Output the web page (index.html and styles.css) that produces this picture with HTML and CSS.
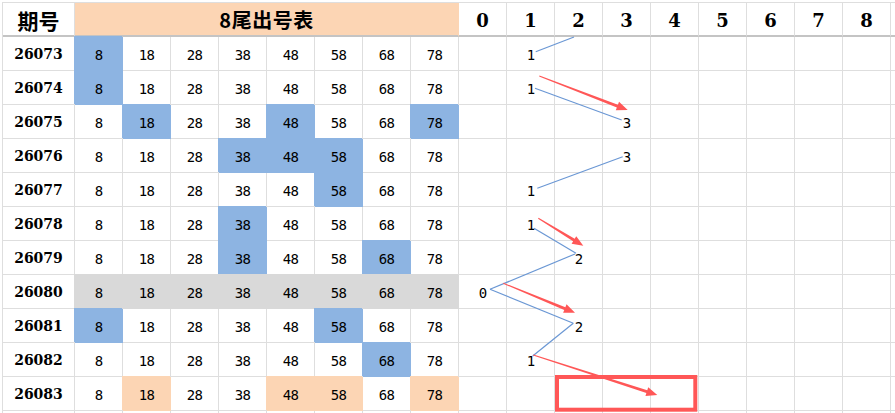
FILE: index.html
```html
<!DOCTYPE html>
<html lang="zh">
<head>
<meta charset="utf-8">
<title>8尾出号表</title>
<link rel="stylesheet" href="styles.css">
</head>
<body>
<div class="sheet">
  <div class="c hd hlabel">期号</div>
  <div class="c hd htitle">8尾出号表</div>
  <div class="c hd hnum">0</div><div class="c hd hnum">1</div><div class="c hd hnum">2</div><div class="c hd hnum">3</div><div class="c hd hnum">4</div><div class="c hd hnum">5</div><div class="c hd hnum">6</div><div class="c hd hnum">7</div><div class="c hd hnum">8</div><div class="c hd"></div>

  <div class="c lbl">26073</div>
  <div class="c n b">8</div><div class="c n">18</div><div class="c n">28</div><div class="c n">38</div><div class="c n">48</div><div class="c n">58</div><div class="c n">68</div><div class="c n">78</div>
  <div class="c k"></div><div class="c k">1</div><div class="c k"></div><div class="c k"></div><div class="c k"></div><div class="c k"></div><div class="c k"></div><div class="c k"></div><div class="c k"></div><div class="c k"></div>

  <div class="c lbl">26074</div>
  <div class="c n b">8</div><div class="c n">18</div><div class="c n">28</div><div class="c n">38</div><div class="c n">48</div><div class="c n">58</div><div class="c n">68</div><div class="c n">78</div>
  <div class="c k"></div><div class="c k">1</div><div class="c k"></div><div class="c k"></div><div class="c k"></div><div class="c k"></div><div class="c k"></div><div class="c k"></div><div class="c k"></div><div class="c k"></div>

  <div class="c lbl">26075</div>
  <div class="c n">8</div><div class="c n b">18</div><div class="c n">28</div><div class="c n">38</div><div class="c n b">48</div><div class="c n">58</div><div class="c n">68</div><div class="c n b">78</div>
  <div class="c k"></div><div class="c k"></div><div class="c k"></div><div class="c k">3</div><div class="c k"></div><div class="c k"></div><div class="c k"></div><div class="c k"></div><div class="c k"></div><div class="c k"></div>

  <div class="c lbl">26076</div>
  <div class="c n">8</div><div class="c n">18</div><div class="c n">28</div><div class="c n b">38</div><div class="c n b">48</div><div class="c n b">58</div><div class="c n">68</div><div class="c n">78</div>
  <div class="c k"></div><div class="c k"></div><div class="c k"></div><div class="c k">3</div><div class="c k"></div><div class="c k"></div><div class="c k"></div><div class="c k"></div><div class="c k"></div><div class="c k"></div>

  <div class="c lbl">26077</div>
  <div class="c n">8</div><div class="c n">18</div><div class="c n">28</div><div class="c n">38</div><div class="c n">48</div><div class="c n b">58</div><div class="c n">68</div><div class="c n">78</div>
  <div class="c k"></div><div class="c k">1</div><div class="c k"></div><div class="c k"></div><div class="c k"></div><div class="c k"></div><div class="c k"></div><div class="c k"></div><div class="c k"></div><div class="c k"></div>

  <div class="c lbl">26078</div>
  <div class="c n">8</div><div class="c n">18</div><div class="c n">28</div><div class="c n b">38</div><div class="c n">48</div><div class="c n">58</div><div class="c n">68</div><div class="c n">78</div>
  <div class="c k"></div><div class="c k">1</div><div class="c k"></div><div class="c k"></div><div class="c k"></div><div class="c k"></div><div class="c k"></div><div class="c k"></div><div class="c k"></div><div class="c k"></div>

  <div class="c lbl">26079</div>
  <div class="c n">8</div><div class="c n">18</div><div class="c n">28</div><div class="c n b">38</div><div class="c n">48</div><div class="c n">58</div><div class="c n b">68</div><div class="c n">78</div>
  <div class="c k"></div><div class="c k"></div><div class="c k">2</div><div class="c k"></div><div class="c k"></div><div class="c k"></div><div class="c k"></div><div class="c k"></div><div class="c k"></div><div class="c k"></div>

  <div class="c lbl">26080</div>
  <div class="c n g">8</div><div class="c n g">18</div><div class="c n g">28</div><div class="c n g">38</div><div class="c n g">48</div><div class="c n g">58</div><div class="c n g">68</div><div class="c n g">78</div>
  <div class="c k">0</div><div class="c k"></div><div class="c k"></div><div class="c k"></div><div class="c k"></div><div class="c k"></div><div class="c k"></div><div class="c k"></div><div class="c k"></div><div class="c k"></div>

  <div class="c lbl">26081</div>
  <div class="c n b">8</div><div class="c n">18</div><div class="c n">28</div><div class="c n">38</div><div class="c n">48</div><div class="c n b">58</div><div class="c n">68</div><div class="c n">78</div>
  <div class="c k"></div><div class="c k"></div><div class="c k">2</div><div class="c k"></div><div class="c k"></div><div class="c k"></div><div class="c k"></div><div class="c k"></div><div class="c k"></div><div class="c k"></div>

  <div class="c lbl">26082</div>
  <div class="c n">8</div><div class="c n">18</div><div class="c n">28</div><div class="c n">38</div><div class="c n">48</div><div class="c n">58</div><div class="c n b">68</div><div class="c n">78</div>
  <div class="c k"></div><div class="c k">1</div><div class="c k"></div><div class="c k"></div><div class="c k"></div><div class="c k"></div><div class="c k"></div><div class="c k"></div><div class="c k"></div><div class="c k"></div>

  <div class="c lbl">26083</div>
  <div class="c n">8</div><div class="c n o">18</div><div class="c n">28</div><div class="c n">38</div><div class="c n o">48</div><div class="c n o">58</div><div class="c n">68</div><div class="c n o">78</div>
  <div class="c k"></div><div class="c k"></div><div class="c k"></div><div class="c k"></div><div class="c k"></div><div class="c k"></div><div class="c k"></div><div class="c k"></div><div class="c k"></div><div class="c k"></div>

  <div class="c t"></div>
  <div class="c t"></div><div class="c t"></div><div class="c t"></div><div class="c t"></div><div class="c t"></div><div class="c t"></div><div class="c t"></div><div class="c t"></div>
  <div class="c t"></div><div class="c t"></div><div class="c t"></div><div class="c t"></div><div class="c t"></div><div class="c t"></div><div class="c t"></div><div class="c t"></div><div class="c t"></div><div class="c t"></div>
</div>

<svg class="overlay" width="895" height="413" viewBox="0 0 895 413" xmlns="http://www.w3.org/2000/svg">
  <g class="trend">
    <line x1="535.7" y1="51.7" x2="574" y2="37"/>
    <line x1="535" y1="88.3" x2="621.7" y2="120"/>
    <line x1="622.7" y1="156.7" x2="537.3" y2="188.3"/>
    <line x1="534" y1="228.3" x2="576" y2="253.3"/>
    <line x1="575" y1="254" x2="490" y2="289.3"/>
    <line x1="490" y1="289.3" x2="573.3" y2="323.3"/>
    <line x1="573.3" y1="323.3" x2="532.7" y2="356"/>
  </g>
  <g class="arrows">
    <polygon points="539.12,76.47 616.86,107.45 615.78,110.25 627.7,110 619.02,101.85 617.94,104.65 539.48,75.53"/>
    <polygon points="538.04,218.73 573.13,241.26 571.57,243.82 583.3,245.7 576.25,236.14 574.69,238.70 538.56,217.87"/>
    <polygon points="503.11,283.76 564.25,309.92 563.11,312.69 575,312.7 566.53,304.37 565.39,307.14 503.49,282.84"/>
    <polygon points="533.15,355.48 646.37,393.05 645.45,395.9 657.3,395 648.21,387.34 647.29,390.19 533.45,354.52"/>
  </g>
  <rect class="box" x="557" y="377" width="138.3" height="32.7"/>
</svg>
</body>
</html>
```
FILE: styles.css
```css
html, body {
  margin: 0;
  padding: 0;
  background: #ffffff;
}

body {
  width: 895px;
  height: 413px;
  overflow: hidden;
  position: relative;
}

.sheet {
  display: grid;
  grid-template-columns: 72px repeat(18, 48px);
  grid-template-rows: 34px repeat(11, 34px) 2px;
  margin: 2px 0 0 2px;
  border-left: 1px solid #dedede;
  border-top: 1px solid #dedede;
  width: max-content;
}

.c {
  box-sizing: border-box;
  border-right: 1px solid #dedede;
  border-bottom: 1px solid #dedede;
  display: flex;
  align-items: center;
  justify-content: center;
  color: #000;
}

.t {
  border-bottom: none;
}

.hd {
  border-bottom: 2px solid #c4c4c4;
  padding-top: 3px;
}

.hlabel {
  font: 700 21px "Noto Sans CJK SC", sans-serif;
  padding-top: 1px;
}

.htitle {
  grid-column: span 8;
  background: #fcd5b4;
  border-right-color: #fcd5b4;
  font: 700 20px "Noto Sans CJK SC", sans-serif;
  letter-spacing: 0.5px;
  padding-top: 1px;
}

.hnum {
  font: 700 18px "DejaVu Serif", serif;
}

.lbl {
  font: 700 14px "DejaVu Serif", serif;
  padding-top: 1px;
}

.n,
.k {
  font: 400 14px "DejaVu Sans Mono", monospace;
  letter-spacing: -0.8px;
  padding-top: 2px;
}

.b {
  background: #8db4e2;
  border-color: #8db4e2;
  box-shadow: -1px -1px 0 0 #8db4e2;
}

.o {
  background: #fcd5b4;
  border-color: #fcd5b4;
  box-shadow: -1px -1px 0 0 #fcd5b4;
}

.g {
  background: #d9d9d9;
  border-color: #d9d9d9;
  box-shadow: -1px -1px 0 0 #d9d9d9;
}

.overlay {
  position: absolute;
  top: 0;
  left: 0;
  pointer-events: none;
}

.trend line {
  stroke: #6a97d4;
  stroke-width: 1.2;
}

.arrows polygon {
  fill: #ff5757;
}

.box {
  fill: none;
  stroke: #ff5757;
  stroke-width: 4;
}
```
